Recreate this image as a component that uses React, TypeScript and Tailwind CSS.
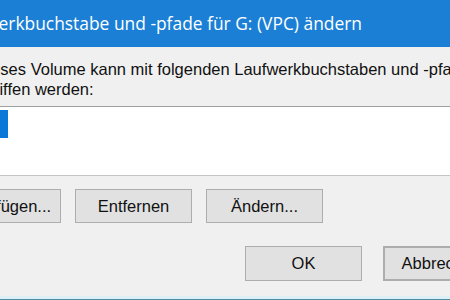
import React from "react";

function Btn({ label, className = "" }: { label: string; className?: string }) {
  return (
    <div
      className={`flex h-[34px] w-[117px] shrink-0 items-center justify-center border border-[#adadad] bg-[#e1e1e1] text-[16.5px] text-[#111] ${className}`}
    >
      {label}
    </div>
  );
}

export default function App() {
  return (
    <div
      className="relative h-[300px] w-[450px] overflow-hidden bg-[#f0f0f0]"
      style={{ fontFamily: '"Liberation Sans", Arial, sans-serif' }}
    >
      <div className="flex h-[47px] items-center justify-end overflow-hidden bg-[#1b7fd6] pr-[88px]">
        <span
          className="shrink-0 whitespace-nowrap text-[17.4px] text-white"
          style={{ fontFamily: '"Open Sans", "Noto Sans", sans-serif' }}
        >
          Laufwerkbuchstabe und -pfade für G: (VPC) ändern
        </span>
      </div>
      <div className="-ml-[56px] flex w-[620px] flex-col">
        <div className="pl-[5px] pt-[12px] text-[16.5px] leading-[20px] text-[#111]">
          Auf dieses Volume kann mit folgenden Laufwerkbuchstaben und -pfaden
          <br />
          zugegriffen werden:
        </div>
        <div className="mt-[7px] h-[70px] border-t border-b border-t-[#a0a0a0] border-b-[#c4c4c4] bg-white pt-[3px] pl-[3px]">
          <div className="h-[28px] w-[61px] bg-[#0a78d7]" />
        </div>
        <div className="mt-[13px] flex gap-[14px]">
          <Btn label="Hinzufügen..." />
          <Btn label="Entfernen" />
          <Btn label="Ändern..." />
        </div>
        <div className="mt-[23px] flex gap-[21px] pl-[301px]">
          <Btn label="OK" className="h-[35px]" />
          <Btn label="Abbrechen" className="h-[35px] border-2 border-[#1a78d2]" />
        </div>
      </div>
      <div className="absolute bottom-0 left-0 w-[450px]">
        <div className="h-[3px] bg-[#dcf0f6]" />
        <div className="h-[1px] bg-[#4a8ea0]" />
      </div>
    </div>
  );
}
